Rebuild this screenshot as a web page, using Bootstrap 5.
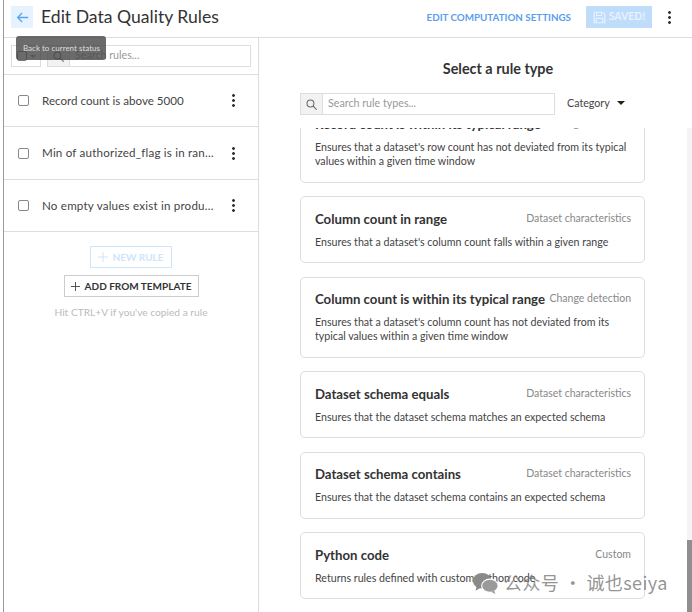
<!DOCTYPE html>
<html lang="en">
<head>
  <meta charset="UTF-8" />
  <title>Edit Data Quality Rules</title>
  <link href="https://cdn.jsdelivr.net/npm/bootstrap@5.3.3/dist/css/bootstrap.min.css" rel="stylesheet" />
  <style>
    html, body { height: 100%; overflow: hidden; }
    body { font-family: "Lato", "Liberation Sans", sans-serif; color: #333; background: #fff; font-size: 12px; }
    .app-shell { height: 612px; border-left: 1px solid #999; margin-left: 3px; position: relative; overflow: hidden; }
    .top-bar { height: 38px; border-bottom: 1px solid #ddd; padding: 0 21px 3px 7px; }
    .back-btn { width: 22px; height: 22px; background: #e6f2fd; border: 0; padding: 0; }
    .page-title { font-size: 17.6px; margin: 0 0 0 8px; font-weight: 400; color: #333; }
    .settings-link { color: #5a9ef0; font-size: 9.8px; font-weight: 700; text-decoration: none; margin-right: 15px; }
    .saved-btn { background: #bfdcfb; color: #e8f2fd; height: 22px; width: 66px; font-size: 10.5px; font-weight: 700; gap: 3px; }
    .kebab { width: 3px; height: 13px; background: radial-gradient(circle at 1.5px 1.5px, #333 1.3px, transparent 1.5px) 0 0 / 3px 5px repeat-y; flex: none; }
    .left-pane { width: 255px; border-right: 1px solid #ddd; flex: none; }
    .filter-row { height: 37px; border-bottom: 1px solid #ddd; padding: 7px 7px 7px 7px; gap: 6px; }
    .select-box { width: 30px; height: 22px; border: 1px solid #ddd; padding-left: 5px; gap: 3px; }
    .select-check { width: 10px; height: 10px; border: 1px solid #777; border-radius: 2px; }
    .select-caret { width: 0; height: 0; border: 3px solid transparent; border-top-color: #999; border-bottom: 0; }
    .search-box { border: 1px solid #ddd; height: 22px; }
    .search-addon { width: 22px; background: #f2f2f2; border-right: 1px solid #ddd; flex: none; }
    .search-box input { border: 0; outline: 0; min-width: 0; flex: 1; padding: 0 5px 2px; font-size: 10.7px; background: transparent; font-family: inherit; }
    .search-box input::placeholder { color: #999; opacity: 1; }
    .rule-row { height: 52.4px; border-bottom: 1px solid #ddd; padding: 0 23px 0 14px; }
    .rule-check { width: 11px; height: 11px; border: 1px solid #888; border-radius: 2px; flex: none; margin-right: 13px; }
    .rule-name { flex: 1; min-width: 0; font-size: 11.6px; color: #444; white-space: nowrap; margin-right: 14px; }
    .rule-name.is-cut { letter-spacing: .2px; }
    .new-rule { width: 82px; height: 22px; border: 1px solid #cfe5fb; color: #cfe5fb; font-size: 10px; font-weight: 700; margin-top: 14px; gap: 4px; }
    .template-btn { width: 135px; height: 22px; border: 1px solid #ccc; color: #333; font-size: 10px; font-weight: 700; margin-top: 7px; gap: 5px; }
    .paste-hint { color: #bbb; font-size: 10.2px; margin-top: 8px; }
    .right-pane { min-width: 0; flex: 1; }
    .pick-title { font-size: 14.4px; font-weight: 700; text-align: center; margin: 0; padding: 22px 0 14px; color: #333; height: 55px; width: 478px; }
    .type-search { width: 255px; margin-left: 41px; }
    .category-pick { color: #444; font-size: 10.7px; margin-left: 12px; gap: 7px; padding-bottom: 2px; }
    .caret-down { width: 0; height: 0; border: 4px solid transparent; border-top-color: #222; border-bottom: 0; }
    .type-list { height: 484px; margin-top: 13px; overflow: hidden; padding-left: 41px; }
    .type-card { width: 345px; border: 1px solid #ddd; border-radius: 5px; padding: 0 13px 0 14px; margin-bottom: 13.5px; flex: none; }
    .type-card.is-short { height: 67px; }
    .type-card.is-tall { height: 81px; }
    .type-card.is-first { height: 81px; margin-top: -26.25px; }
    .type-head { padding-top: 13.4px; height: 37.4px; }
    .type-name { font-size: 13.2px; font-weight: 700; color: #333; white-space: nowrap; margin-top: -1px; }
    .type-tag { font-size: 10.5px; color: #888; white-space: nowrap; }
    .type-desc { font-size: 10.65px; color: #444; line-height: 14px; }
    .thumb-track { position: absolute; right: 0; top: 128px; bottom: 0; width: 5px; background: #f4f4f4; }
    .thumb-bar { position: absolute; right: 0; top: 540px; bottom: 0; width: 5px; background: #8f8f8f; }
    .hover-tip { position: absolute; left: 12px; top: 36px; width: 90px; height: 24px; background: rgba(70,70,70,.8); border-radius: 3px; color: #ddd; font-size: 8px; padding: 8px 0 0 7px; line-height: 9px; }
    .mark-overlay { position: absolute; left: 468px; top: 569px; color: rgba(120,120,120,.8); font-family: "Noto Sans CJK SC", sans-serif; font-size: 18px; gap: 5px; letter-spacing: .4px; white-space: nowrap; }
  </style>
</head>
<body>
  <div class="app-shell">
    <!-- Header -->
    <div class="top-bar d-flex align-items-center">
      <button class="back-btn d-flex align-items-center justify-content-center" type="button">
        <svg width="13" height="13" viewBox="0 0 16 16" fill="none" stroke="#5aa5f2" stroke-width="1.6"><path d="M15 8H2M7.5 2.5 2 8l5.5 5.5" /></svg>
      </button>
      <h1 class="page-title">Edit Data Quality Rules</h1>
      <a class="settings-link ms-auto" href="#">EDIT COMPUTATION SETTINGS</a>
      <div class="saved-btn d-flex align-items-center justify-content-center">
        <svg width="13" height="13" viewBox="0 0 16 16" fill="none" stroke="#e8f2fd" stroke-width="1.4"><path d="M1.5 1.5h10.5l2.5 2.5v10.5h-13zM4.5 1.5v4h6v-4M4 14.5v-5.5h8v5.5" /></svg>
        SAVED!
      </div>
      <span class="kebab ms-3"></span>
    </div>

    <div class="d-flex" style="height:574px">
      <!-- Rules -->
      <div class="left-pane">
        <div class="filter-row d-flex">
          <div class="select-box d-flex align-items-center"><span class="select-check"></span><span class="select-caret"></span></div>
          <div class="search-box d-flex flex-grow-1">
            <span class="search-addon d-flex align-items-center justify-content-center">
              <svg width="11" height="11" viewBox="0 0 16 16" fill="none" stroke="#666" stroke-width="1.5"><circle cx="6.5" cy="6.5" r="5" /><path d="m10.5 10.5 5 5" /></svg>
            </span>
            <input type="text" placeholder="Search rules..." />
          </div>
        </div>
        <div class="rule-row d-flex align-items-center"><span class="rule-check"></span><span class="rule-name">Record count is above 5000</span><span class="kebab"></span></div>
        <div class="rule-row d-flex align-items-center"><span class="rule-check"></span><span class="rule-name is-cut">Min of authorized_flag is in ran…</span><span class="kebab"></span></div>
        <div class="rule-row d-flex align-items-center"><span class="rule-check"></span><span class="rule-name is-cut">No empty values exist in produ…</span><span class="kebab"></span></div>
        <div class="d-flex flex-column align-items-center">
          <div class="new-rule d-flex align-items-center justify-content-center">
            <svg width="10" height="10" viewBox="0 0 10 10" stroke="#cfe5fb" stroke-width="1"><path d="M5 0v10M0 5h10" /></svg>
            NEW RULE
          </div>
          <div class="template-btn d-flex align-items-center justify-content-center">
            <svg width="9" height="9" viewBox="0 0 10 10" stroke="#444" stroke-width="1"><path d="M5 0v10M0 5h10" /></svg>
            ADD FROM TEMPLATE
          </div>
          <div class="paste-hint">Hit CTRL+V if you've copied a rule</div>
        </div>
      </div>

      <!-- Rule types -->
      <div class="right-pane">
        <h2 class="pick-title">Select a rule type</h2>
        <div class="d-flex align-items-center">
          <div class="search-box type-search d-flex">
            <span class="search-addon d-flex align-items-center justify-content-center">
              <svg width="11" height="11" viewBox="0 0 16 16" fill="none" stroke="#666" stroke-width="1.5"><circle cx="6.5" cy="6.5" r="5" /><path d="m10.5 10.5 5 5" /></svg>
            </span>
            <input type="text" placeholder="Search rule types..." />
          </div>
          <div class="category-pick d-flex align-items-center">Category <span class="caret-down"></span></div>
        </div>
        <div class="type-list d-flex flex-column">
          <div class="type-card is-first">
            <div class="type-head d-flex justify-content-between align-items-start"><span class="type-name">Record count is within its typical range</span><span class="type-tag">Change detection</span></div>
            <div class="type-desc">Ensures that a dataset's row count has not deviated from its typical values within a given time window</div>
          </div>
          <div class="type-card is-short">
            <div class="type-head d-flex justify-content-between align-items-start"><span class="type-name">Column count in range</span><span class="type-tag">Dataset characteristics</span></div>
            <div class="type-desc">Ensures that a dataset's column count falls within a given range</div>
          </div>
          <div class="type-card is-tall">
            <div class="type-head d-flex justify-content-between align-items-start"><span class="type-name">Column count is within its typical range</span><span class="type-tag">Change detection</span></div>
            <div class="type-desc">Ensures that a dataset's column count has not deviated from its typical values within a given time window</div>
          </div>
          <div class="type-card is-short">
            <div class="type-head d-flex justify-content-between align-items-start"><span class="type-name">Dataset schema equals</span><span class="type-tag">Dataset characteristics</span></div>
            <div class="type-desc">Ensures that the dataset schema matches an expected schema</div>
          </div>
          <div class="type-card is-short">
            <div class="type-head d-flex justify-content-between align-items-start"><span class="type-name">Dataset schema contains</span><span class="type-tag">Dataset characteristics</span></div>
            <div class="type-desc">Ensures that the dataset schema contains an expected schema</div>
          </div>
          <div class="type-card is-short">
            <div class="type-head d-flex justify-content-between align-items-start"><span class="type-name">Python code</span><span class="type-tag">Custom</span></div>
            <div class="type-desc">Returns rules defined with custom python code</div>
          </div>
        </div>
      </div>
    </div>

    <!-- Overlays -->
    <div class="thumb-track"></div>
    <div class="thumb-bar"></div>
    <div class="hover-tip">Back to current status</div>
    <div class="mark-overlay d-flex align-items-center">
      <svg width="27" height="22" viewBox="0 0 24 20" fill="#8a8a8a"><ellipse cx="9" cy="8" rx="8.5" ry="7" /><path d="m4 13-1 4 5-3z" /><ellipse cx="16" cy="12.5" rx="7.5" ry="6" fill="#9a9a9a" stroke="#fff" /><path d="m20 17 1 3-4-2z" fill="#9a9a9a" /></svg>
      <span>公众号 · 诚也seiya</span>
    </div>
  </div>
  <script src="https://cdn.jsdelivr.net/npm/bootstrap@5.3.3/dist/js/bootstrap.bundle.min.js"></script>
</body>
</html>
